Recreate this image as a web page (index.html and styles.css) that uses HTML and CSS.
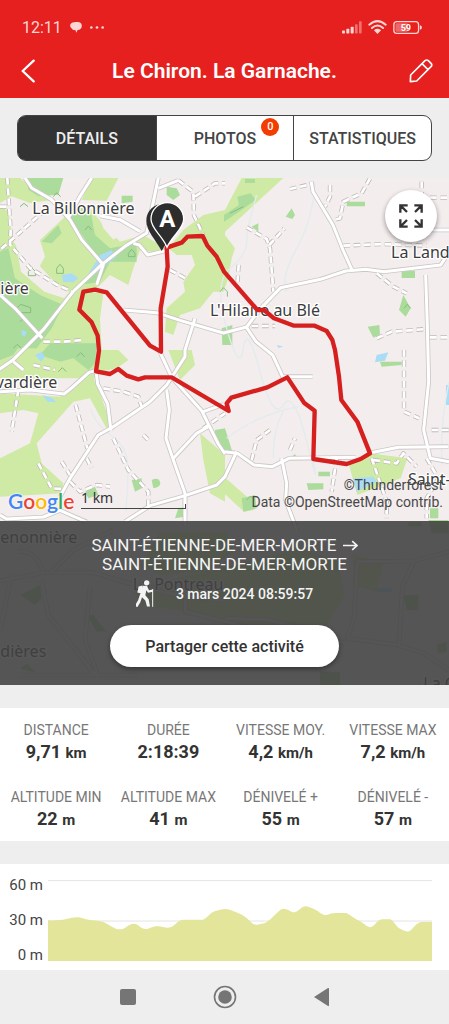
FILE: index.html
```
<!DOCTYPE html>
<html lang="fr">
<head>
<meta charset="utf-8">
<meta name="viewport" content="width=device-width, initial-scale=1">
<title>Le Chiron. La Garnache.</title>
<link rel="stylesheet" href="styles.css">
</head>
<body>
<header class="top">
  <div class="status">
    <div class="status-side">
      <span class="clock">12:11</span>
      <svg viewBox="0 0 36 34" width="12" height="11" aria-hidden="true"><path fill="currentColor" d="M12 1C5 1 0 5 0 11c0 5 3 9 6 10 1 4 6 5 10 4l3 8 4-8c8-1 13-6 13-13 0-6-3-10-8-11-3-1-9-1-16 0z"/></svg>
      <svg viewBox="0 0 42 8" width="14" height="3" aria-hidden="true"><g fill="currentColor"><circle cx="4" cy="4" r="4"/><circle cx="21" cy="4" r="4"/><circle cx="38" cy="4" r="4"/></g></svg>
    </div>
    <div class="status-side">
      <svg viewBox="0 0 60 38" width="20" height="13" aria-hidden="true"><g fill="currentColor"><rect y="28" width="9" height="9" rx="2"/><rect x="13" y="23" width="9" height="14" rx="2"/><rect x="26" y="17" width="9" height="20" rx="2"/><g opacity=".45"><rect x="39" y="9" width="8" height="28" rx="2"/><rect x="51" y="0" width="8" height="37" rx="2"/></g></g></svg>
      <svg viewBox="0 0 58 42" width="19" height="14" aria-hidden="true"><g fill="none" stroke="currentColor" stroke-width="6" stroke-linecap="round"><path d="M4 14Q29-8 54 14M12 24q17-15 34 0"/></g><path fill="currentColor" d="M18 31q11-9 22 0L29 42z"/></svg>
      <svg viewBox="0 0 88 40" width="29" height="13" aria-hidden="true"><rect x="2" y="2" width="76" height="36" rx="9" fill="none" stroke="currentColor" stroke-width="4"/><path fill="currentColor" d="M82 14h2q4 0 4 6t-4 6h-2z"/><rect x="7" y="7" width="38" height="26" rx="4" fill="currentColor" opacity=".4"/><text x="39" y="30" text-anchor="middle" class="battery">59</text></svg>
    </div>
  </div>
  <div class="titlebar">
    <button class="icon-btn" aria-label="Retour"><svg viewBox="0 0 42 70" width="14" height="24"><path d="M38 4L5 35l33 31" fill="none" stroke="currentColor" stroke-width="7" stroke-linecap="round" stroke-linejoin="round"/></svg></button>
    <h1>Le Chiron. La Garnache.</h1>
    <button class="icon-btn" aria-label="Modifier"><svg viewBox="0 0 72 72" width="24" height="24"><path d="M4 68l1-20L48 5q5-4 10 0l8 8q5 5 0 10L23 66zM39 14l18 18" fill="none" stroke="currentColor" stroke-width="5" stroke-linejoin="round"/></svg></button>
  </div>
</header>

<nav class="tabs" aria-label="Sections">
  <button class="tab active">DÉTAILS</button>
  <button class="tab">PHOTOS<span class="badge">0</span></button>
  <button class="tab">STATISTIQUES</button>
</nav>

<main>
<section class="map-area">
  <svg class="map" viewBox="0 9 1347 1521" preserveAspectRatio="xMidYMin slice" role="img" aria-label="Carte du parcours">
    <defs>
      <g id="roads">
        <path d="M75 9l20 30 60 35 55 60 35 60 65 75-20 60"/>
        <path d="M275 9l-35 55-35 65M0 360l45 40 82 90M475 9l-20 95-15 70-65 40-70 55-85 80-90 115-90 90-80 55"/>
        <path d="M475 40l60-24M300 122l60 12 60 35M400 205l18 5 25 30 60-14"/>
        <path d="M370 405l100 8 70 23 130 38 70-18 42-56 60-62 120-25 75-25 60-5 55 7 170-20 20-30 50-90"/>
        <path d="M585 430l-30 95v20l-55 85-50 50-110 75-45 25-85 130-30 55"/>
        <path d="M1260 165h87M934 20l5 30 60 100 30 75 28 62M1277 300l5 150 4 170-15 145 20 85 56 10"/>
        <path d="M738 455l30 45 50 40 30 65h90M470 510l45 97 90 100 25 50 25 50 20 30M672 830l40 5 50 35 55 5 50-25 200-3"/>
        <path d="M1105 835l90-18 150-2M288 587l5 40 30 60 10 80M500 645l8 60-10 85 22 65 35 100v95"/>
        <path d="M375 1040l75-48 105-30 95-32 25-25 35-75M520 850l70-75 35-20M845 850l15 75-3 50 35 95"/>
        <path d="M287 587l-20 5-50 45-25 20-100-12-92 5M40 560l30 25M0 1020l20 12 110-6 50-20 80 35"/>
        <path d="M610 710l62-22"/>
      </g>
      <g id="low-roads">
        <path d="M0 1218l130-25 150 0 135 40 80 20 180 25M0 1370l20-100 15-75M150 1195l70-70 120-60M130 1195q-20-70-75-65M125 1220l20 100 140 180M270 1235l-15 160 40 110M60 1500h350M675 1330l130 5 120 30 110 40M1072 1160l170-2 105-28M1242 1160l-35 75-10 180M1072 1160l-10 170-20 60 150 20 80 25 75 50M556 1220v90l240 60"/>
      </g>
      <g id="tracks">
        <path d="M22 9l10 160-2 40 60 70 80 50 45 20M135 105l-95 85-40 35M0 95h20M535 16l45 35 2 70 28 60M585 65l60-40h30M510 285l55 30"/>
        <path d="M740 157l60 35 10 28 10 130M808 210l45-50M716 270l-4 60M870 42l65-15M990 30v35l-15 30M1110 10l-25 45-55 25-10 50-20 5M1030 212l120-5 130 5M1265 20v40M1290 68h57M1130 295l50 40 40 20M1130 490l45-20 105-8M755 453h70M1290 487h57"/>
        <path d="M1212 525v185l45 20M1295 765h52M227 690l35 130M310 640l60 10 45 15 10 30M115 865l40 75 35 2M340 790l45 95 60 65v45M55 645l-20 125M100 570l65 15M430 780l20 20M610 760l65-45M185 860l25 40M755 855l15-60 40-30M1010 850l-15 100M1115 850l45 130v50M1120 855l70 10 20-30 40 40M1280 850l35 60-35 60v60M555 970v60M210 920l30 30 50-20 40 5M260 850l15 30M130 500h60l60-5M870 825l15-35"/>
      </g>
    </defs>
    <rect class="land" y="0" width="1347" height="1540"/>
    <g class="meadow">
      <path d="M0 9h60l35 30 65 35-70 10-55-20-35 20zM245 75l30-66h80l-35 68zM120 195l75-70 75-25 40 50 50 50 70-20 75 45-25 10-60-10-20 55-15 50-55-30-80 80h-70l-70-90 25-45zM0 90l25 20 15 90 55 75 80 60 55 15 80 5-10 75 5 95h50l30 30-35 25-50 10-10 20H0z"/>
      <path d="M550 165l60-45 65-15 50-96h125L675 170v10l30 40-10 30-10 60-15 40-30 0-40 50-60 20-20 60-25-10 5-70 55-50-5-30 35-50-10-30-45 0-25-20z"/>
      <path d="M0 655l180 10 90-80 30 70 35 100-10 15-55-100-50 10-110 125 15 60 65 60-5 30-185 10V850l90-45 25-90-45-10-70 10zM505 525h70l10 45-45 45zM600 775l75 65v140l-45-25-20-100zM672 905l80 70 10 30-30 5-60-55z"/>
      <path d="M1047 870l63-35 112 15-20 60-130 50zM480 1070h200l20 60-80 60-140 10-60-30zM395 1240l180-40 330-80 110 40 20 100-60 100-180 10-170-50-200-30zM1060 1140l90 20-20 90-70-20z"/>
    </g>
    <path class="land" d="M300 130l70 30-10 20-20 14-30-34zM48 210l50 40 60 65 50 35-15 20-60-20-70-60zM0 280l20-5 20 40-40 20z"/>
    <g class="wood">
      <path d="M80 9h110l-15 50-60 5-30-20zM195 95l75 5 15 80 45 40 80-15 0 55-80 0-30 60-60 10 60-65-50-80-45-60zM125 200l50-50 10 25-30 30zM0 230l25-10 20 90 75 50 70 30-35 70-45 60H0zM0 420h110l-40 60-70 30zM150 505h140l-5 60-20 20-45-35-40 10-60-20zM0 515l60-5-20 30-40 15zM500 35l30 5 10 20-20 15-20-15zM365 62h33v18l-33 5z"/>
      <path d="M712 65l40-10 15 20-50 35-45 30v-20l45-30zM735 12h30v12h-30zM755 155l20-10v25zM857 125l18-25 10 20-8 12zM1040 80h55v14h-55zM1205 287h40v22h-40zM1210 360l22 40-15 25-20-20zM1103 455l35-5 2 28-20 10zM665 460l32-10v60h-30zM1140 560h65v10l-60 5zM955 890h35v14h-35zM920 925h50v18l-45 2zM395 915l30-5v30l-20 10zM455 915q20-10 25 5t-20 20zM645 765l30-5 22 70-22 10-30-50zM725 970l40-10 5 40-40 10zM1290 1000h25v30h-25zM255 950l30-15 10 25-30 10zM535 1000l20-5v30l-30 5zM865 850l20-12 10 12z"/>
      <path d="M60 1260l60-30 5 40-20 20zM260 1320l20 0 40 50-30 0zM60 1480l20-15 30 30zM1210 1260h45v45h-35zM1310 1410l30-10v30l-25 5zM1285 1035h60v40h-50zM1225 1040h40v15h-40zM960 1490h60v40h-60z"/>
    </g>
    <g class="water"><path d="M185 300l30-5 20 15-15 12-30-2zM300 240l35-15 15 20-25 20-55 45-10-5zM105 540l20-10 10 15-12 15zM1130 540l35-8-10 25-30 5zM1060 910l60-5 10 15-60 30zM1338 630h9v60h-9zM128 660l30 10 10 12-25-2zM65 465l15 5-5 15-10-5zM830 510l20 5-15 3zM1130 1240h45v12h-45z"/></g>
    <path class="stream" d="M770 60q-30 100-30 140t-50 80-10 180 50 60 50 70 70 100 70 110 20 60M272 700q15 50 60 80t50 80-5 150M680 790q90-70 215-95M1347 620q-30 150-20 250M820 850q0-90 30-140M945 20q-5 110-55 200t-30 130"/>
    <g class="trees"><path d="M170 280l10-12 10 12 0 15h-20zM60 95l12-10 12 10M85 290l10-12 12 12v12H85zM50 400l12-12 30 10v15H55zM160 65l10-12 12 12M385 235l10-12 10 12v10h-20zM660 350l10-12 12 12v15M690 115l40-20M1212 400l10-12 10 12M60 440l12-12 12 12M40 520l12-12 12 12M175 590l12-12 12 12M230 545l12-12 12 12M255 165l10-12 10 12M740 975l12-12 12 12"/></g>
    <use href="#roads" class="road-case"/><use href="#low-roads" class="road-case"/><use href="#tracks" class="track-case"/>
    <use href="#roads" class="road"/><use href="#low-roads" class="low-road"/><use href="#tracks" class="track-fill"/>
    <g class="place">
      <text x="97" y="117">La Billonnière</text>
      <text x="1" y="357">ière</text>
      <text x="630" y="422">L'Hilaire au Blé</text>
      <text x="1173" y="249">La Land</text>
      <text x="172" y="640" text-anchor="end">vardière</text>
      <text x="1224" y="931">Saint-</text>
      <text x="1" y="1105">enonnière</text>
      <text x="398" y="1244">La Pontreau</text>
      <text x="1" y="1445">dières</text>
      <text x="1270" y="1541">La G</text>
    </g>
    <path class="route" d="M500 218l45-15 17-18 46-2 14 29 28 33 22 45 100 115h20l30 25 60 22h62l36 16 17 27 8 30 12 80 7 70 48 65 38 95-28 17-42 15-100-15 4-145-32-24-50-76-60 30-108 31-14 17 6 23-171-101h-80l-20 6-35-11-25-20-25 15-42-8 9-62-4-45-18-40-37-38 12-54 35-6 35 8 130 160 33 18-1-130 5-30 16-95z"/>
    <g>
      <path class="pin" d="M485 228c-18-35-46-60-46-91 0-28 22-50 49-50s49 22 49 50c0 31-34 56-52 91z"/>
      <path class="pin pin-front" d="M501 217c-14-36-48-55-48-84 0-29 22-50 49-50s49 21 49 50c0 29-34 48-50 84z"/>
      <text class="pin-letter" x="502" y="157" text-anchor="middle">A</text>
    </g>
  </svg>
  <div class="map-view">
    <button class="expand" aria-label="Plein écran"><svg viewBox="0 0 72 72" width="24" height="24"><path d="M4 26V4h22M4 4l20 20M46 4h22v22M68 4L48 24M4 46v22h22M4 68l20-20M46 68h22V46M68 68L48 48" fill="none" stroke="currentColor" stroke-width="7"/></svg></button>
    <div class="map-foot">
      <span class="google"><span class="g-blue">G</span><span class="g-red">o</span><span class="g-yellow">o</span><span class="g-blue">g</span><span class="g-green">l</span><span class="g-red">e</span></span>
      <span class="scale">1 km</span>
      <span class="credit">©Thunderforest<br>Data ©OpenStreetMap contrib.</span>
    </div>
  </div>
  <div class="summary">
    <p class="places">SAINT-ÉTIENNE-DE-MER-MORTE <svg class="arrow" viewBox="0 0 44 32" width="15" height="11" role="img" aria-label="vers"><path d="M0 16h40M27 3l14 13-14 13" fill="none" stroke="currentColor" stroke-width="5"/></svg><br>SAINT-ÉTIENNE-DE-MER-MORTE</p>
    <p class="when">
      <svg viewBox="0 0 54 80" width="18" height="27" aria-hidden="true"><g fill="currentColor"><circle cx="32" cy="8" r="8"/><path d="M8 19l12-3-4 24-12-3zM21 17h12l6 13 12-2v7l-15 3-5-8-3 15 10 12 4 22h-9l-5-18-10-10-5 15-9 15-8-4 10-16z"/></g><path d="M50 27v53" stroke="currentColor" stroke-width="3"/></svg>
      <time datetime="2024-03-03T08:59:57">3 mars 2024 08:59:57</time>
    </p>
    <button class="share">Partager cette activité</button>
  </div>
</section>

<dl class="stats">
  <div><dt>DISTANCE</dt><dd>9,71 <small>km</small></dd></div>
  <div><dt>DURÉE</dt><dd>2:18:39</dd></div>
  <div><dt>VITESSE MOY.</dt><dd>4,2 <small>km/h</small></dd></div>
  <div><dt>VITESSE MAX</dt><dd>7,2 <small>km/h</small></dd></div>
  <div><dt>ALTITUDE MIN</dt><dd>22 <small>m</small></dd></div>
  <div><dt>ALTITUDE MAX</dt><dd>41 <small>m</small></dd></div>
  <div><dt>DÉNIVELÉ +</dt><dd>55 <small>m</small></dd></div>
  <div><dt>DÉNIVELÉ -</dt><dd>57 <small>m</small></dd></div>
</dl>

<section class="chart" aria-label="Altitude">
  <div class="axis"><span>60 m</span><span>30 m</span><span>0 m</span></div>
  <svg class="plot" viewBox="145 59 1152 243" preserveAspectRatio="none" aria-hidden="true">
    <path d="M145 61h1152M145 182h1152" stroke="#e4e4e4" stroke-width="3"/>
    <path fill="#e3e59a" d="M145 302V180C160 181 185 180 200 176S235 167 250 174 290 180 310 184C330 193 345 207 360 207 380 207 385 190 402 190 418 190 423 207 440 206 455 204 460 197 475 198S500 205 515 200C530 192 535 177 555 178H610C625 172 630 158 645 153S675 143 690 148 725 160 740 172C755 186 760 194 772 193 795 190 805 185 820 169 835 156 845 142 855 146 870 148 875 157 885 156 900 152 905 137 920 138 935 141 945 147 955 153 970 165 975 167 990 161 1000 157 1010 158 1040 158 1055 165 1065 177 1080 182 1095 191 1105 203 1115 200 1130 194 1130 178 1150 177H1172C1185 183 1190 203 1205 207 1220 215 1225 216 1235 208 1245 198 1255 185 1265 185H1297V302z"/>
  </svg>
</section>
</main>

<nav class="system" aria-label="Système">
  <button aria-label="Applications"><svg viewBox="0 0 24 24" width="24" height="24"><rect x="4" y="4" width="16" height="16" rx="2" fill="currentColor"/></svg></button>
  <button aria-label="Accueil"><svg viewBox="0 0 24 24" width="24" height="24"><circle cx="12" cy="12" r="10.5" fill="none" stroke="currentColor" stroke-width="1.6"/><circle cx="12" cy="12" r="6.8" fill="currentColor"/></svg></button>
  <button aria-label="Précédent"><svg viewBox="0 0 24 24" width="24" height="24"><path d="M4 12L18 3q1-.5 1 1v16q0 1.500-1 1z" fill="currentColor"/></svg></button>
</nav>
</body>
</html>
```
FILE: styles.css
```
* { box-sizing: border-box; }

body {
  margin: 0;
  background: #eee;
  color: #333;
  font-family: Roboto, "Liberation Sans", sans-serif;
}

button {
  border: 0;
  padding: 0;
  background: none;
  color: inherit;
  font: inherit;
}

svg { display: block; }

.top {
  height: 98px;
  padding: 18px 16px 0;
  background: #e5201f;
  color: #fff;
}

.status,
.status-side {
  display: flex;
  align-items: center;
}

.status {
  justify-content: space-between;
  height: 18px;
  padding: 0 11px 0 6px;
  color: #fcd5d4;
}

.status-side { gap: 8px; }
.status-side:last-child { gap: 6px; }
.clock { font-size: 16px; }
.battery { fill: #fff; font: 700 28px Roboto, sans-serif; }

.titlebar {
  display: flex;
  align-items: center;
  justify-content: space-between;
  height: 69px;
}

.icon-btn {
  display: flex;
  width: 24px;
  justify-content: center;
}

h1 {
  margin: 0;
  font-size: 21px;
  font-weight: 600;
  line-height: 24px;
}

.tabs {
  display: grid;
  grid-template-columns: repeat(3, 1fr);
  height: 46px;
  margin: 17px;
  border: 1px solid #444;
  border-radius: 9px;
  background: #fff;
}

.tab {
  position: relative;
  color: #444;
  font-size: 16px;
  font-weight: 500;
}

.tab + .tab { border-left: 1px solid #444; }
.tab.active { border-radius: 7px 0 0 7px; background: #333; color: #eee; }

.badge {
  position: absolute;
  top: 2px;
  right: 14px;
  width: 18px;
  border-radius: 9px;
  background: #f23c00;
  color: #fff;
  font-size: 11px;
  line-height: 18px;
}

.map-area {
  position: relative;
  overflow: hidden;
}

.map {
  position: absolute;
  inset: 0;
  width: 100%;
  height: 100%;
}

.land { fill: #f4eded; }
.meadow { fill: #ceeaa4; }
.wood { fill: #abdc9c; }
.water { fill: #aadcf5; }
.stream { fill: none; stroke: #e2ebee; stroke-width: 4; }
.trees { fill: none; stroke: #86bd7c; stroke-width: 3; }

.road-case, .road, .low-road, .track-case, .track-fill { fill: none; stroke-linejoin: round; }
.road-case { stroke: #cbc7c6; stroke-width: 14; }
.road { stroke: #fff; stroke-width: 9; }
.low-road { stroke: #f4eded; stroke-width: 9; }
.track-case { stroke: #bfbab8; stroke-width: 13; stroke-dasharray: 20 11; }
.track-fill { stroke: #fff; stroke-width: 8; stroke-dasharray: 20 11; }

.place {
  fill: #3c3c3c;
  stroke: #fff;
  stroke-width: 8px;
  stroke-linejoin: round;
  paint-order: stroke;
  font: 48px "Noto Sans", sans-serif;
}

.route {
  fill: none;
  stroke: #d5201f;
  stroke-width: 13;
  stroke-linejoin: round;
}

.pin { fill: #2d2d2d; }
.pin-front { stroke: #fff; stroke-width: 4; }
.pin-letter { fill: #fff; font: 700 72px Roboto, sans-serif; }

.map-view {
  position: relative;
  display: flex;
  flex-direction: column;
  align-items: flex-end;
  justify-content: space-between;
  height: 343px;
  padding: 12px 6px 10px 8px;
}

.expand {
  display: grid;
  place-items: center;
  width: 52px;
  height: 52px;
  margin-right: 6px;
  border-radius: 50%;
  background: #fff;
  box-shadow: 0 2px 5px rgba(0, 0, 0, .4);
}

.map-foot {
  display: flex;
  align-items: flex-end;
  align-self: stretch;
}

.google {
  width: 73px;
  font: 600 21px/20px Lato, sans-serif;
  text-shadow: 0 0 2px #fff, 0 0 2px #fff;
}

.g-blue { color: #4285f4; }
.g-red { color: #ea4335; }
.g-yellow { color: #fbbc05; }
.g-green { color: #34a853; }

.scale {
  position: relative;
  width: 105px;
  margin-bottom: 2px;
  border-bottom: 1px solid #444;
  font: 14px/20px "Noto Sans", sans-serif;
}

.scale::after {
  content: "";
  position: absolute;
  right: 0;
  bottom: 0;
  height: 4px;
  border-right: 1px solid #444;
}

.credit {
  margin-left: auto;
  color: #484848;
  font-size: 14px;
  line-height: 17px;
  text-align: right;
  white-space: nowrap;
}

.summary {
  position: relative;
  display: flex;
  flex-direction: column;
  align-items: center;
  padding: 15px 16px 18px;
  background: rgba(64, 64, 64, .88);
  color: #f4f4f4;
}

.summary p { margin: 0; }
.places { font-size: 17px; line-height: 19px; text-align: center; }
.arrow { display: inline-block; margin-left: 2px; }

.when {
  display: flex;
  align-items: center;
  gap: 22px;
  padding: 6px 0 18px;
  font-size: 14px;
  font-weight: 500;
}

.share {
  min-width: 229px;
  height: 42px;
  border-radius: 21px;
  background: #fff;
  color: #333;
  font-size: 16px;
  font-weight: 500;
  box-shadow: 0 2px 5px rgba(0, 0, 0, .4);
}

.stats {
  display: grid;
  grid-template-columns: repeat(4, 1fr);
  row-gap: 22px;
  margin: 23px 0;
  padding: 12px 0 9px;
  background: #fff;
  text-align: center;
}

.stats dt { color: #777; font-size: 14px; line-height: 20px; white-space: nowrap; }
.stats dd { margin: 0; font-size: 18px; font-weight: 700; line-height: 23px; }
.stats small { font-size: 15px; }

.chart {
  display: flex;
  gap: 5px;
  height: 106px;
  padding: 16px 17px 9px 8px;
  background: #fff;
}

.axis {
  display: flex;
  flex-direction: column;
  justify-content: space-between;
  width: 35px;
  color: #444;
  font-size: 15px;
  line-height: 11px;
  text-align: right;
}

.plot { flex: 1; min-width: 0; height: 81px; }

.system {
  display: flex;
  align-items: center;
  justify-content: center;
  gap: 73px;
  height: 53px;
  color: #757575;
}
```
